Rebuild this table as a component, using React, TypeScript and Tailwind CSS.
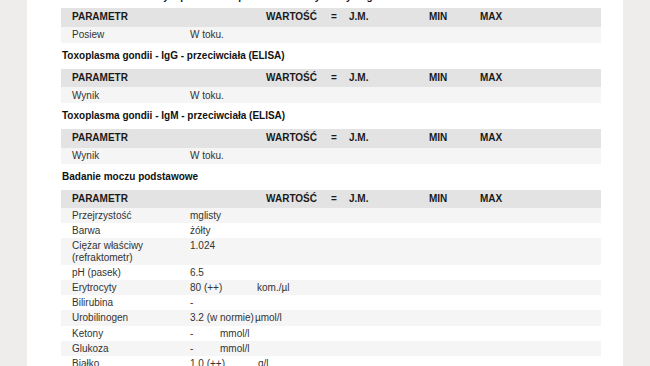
import React from "react";

const font = { fontFamily: '"Liberation Sans", Arial, sans-serif' };

function Title({ text, first }: { text: string; first?: boolean }) {
  return (
    <div
      className={
        "h-[26px] flex items-center pl-[1px] text-[10px] leading-[12px] font-bold text-[#111111] whitespace-nowrap" +
        (first ? " -mt-[26px] pt-[4px]" : "")
      }
    >
      {text}
    </div>
  );
}

function Header() {
  return (
    <div className="h-[18.5px] bg-[#e3e3e3] grid grid-cols-[118px_127px_14px_18px_80px_51px_1fr] pl-[11px] items-center text-[10px] leading-[12px] font-bold text-[#1a1a1a]">
      <div>PARAMETR</div>
      <div className="text-right">WARTOŚĆ</div>
      <div />
      <div>=</div>
      <div>J.M.</div>
      <div>MIN</div>
      <div>MAX</div>
    </div>
  );
}

type Row = { p: React.ReactNode; v: string; u?: string; w?: string };

function DataRow({ row, light, tall }: { row: Row; light: boolean; tall?: boolean }) {
  return (
    <div
      className={
        "grid grid-cols-[118px_1fr] pl-[11px] text-[10px] text-[#333333] items-start " +
        (tall ? "h-[16px] py-[2.5px] leading-[11px] " : "py-[2px] leading-[11.2px] ") +
        (light ? "bg-[#f5f5f5]" : "bg-white")
      }
    >
      <div>{row.p}</div>
      <div className="flex whitespace-nowrap">
        <span className={row.w ?? ""}>{row.v}</span>
        {row.u ? <span>{row.u}</span> : null}
      </div>
    </div>
  );
}

const urine: Row[] = [
  { p: "Przejrzystość", v: "mglisty" },
  { p: "Barwa", v: "żółty" },
  {
    p: (
      <>
        Ciężar właściwy
        <br />
        (refraktometr)
      </>
    ),
    v: "1.024",
  },
  { p: "pH (pasek)", v: "6.5" },
  { p: "Erytrocyty", v: "80 (++)", u: "kom./µl", w: "w-[67px]" },
  { p: "Bilirubina", v: "-" },
  { p: "Urobilinogen", v: "3.2 (w normie)", u: "µmol/l", w: "mr-[1px]" },
  { p: "Ketony", v: "-", u: "mmol/l", w: "w-[30px]" },
  { p: "Glukoza", v: "-", u: "mmol/l", w: "w-[30px]" },
  { p: "Białko", v: "1.0 (++)", u: "g/l", w: "w-[68px]" },
];

export default function App() {
  return (
    <div className="w-[650px] h-[366px] overflow-hidden bg-[#efedeb] flex justify-center" style={font}>
      <div className="w-[596px] h-full bg-white pl-[34px] pr-[22px] pt-[8px]">
        <Title first text="Posiew w kierunku mykoplazm i ureaplazm - ilościowy z antybiogramem" />
        <Header />
        <DataRow tall row={{ p: "Posiew", v: "W toku." }} light />
        <Title text="Toxoplasma gondii - IgG - przeciwciała (ELISA)" />
        <Header />
        <DataRow tall row={{ p: "Wynik", v: "W toku." }} light />
        <Title text="Toxoplasma gondii - IgM - przeciwciała (ELISA)" />
        <Header />
        <DataRow tall row={{ p: "Wynik", v: "W toku." }} light />
        <Title text="Badanie moczu podstawowe" />
        <Header />
        {urine.map((r, i) => (
          <DataRow key={i} row={r} light={i % 2 === 0} />
        ))}
      </div>
    </div>
  );
}
